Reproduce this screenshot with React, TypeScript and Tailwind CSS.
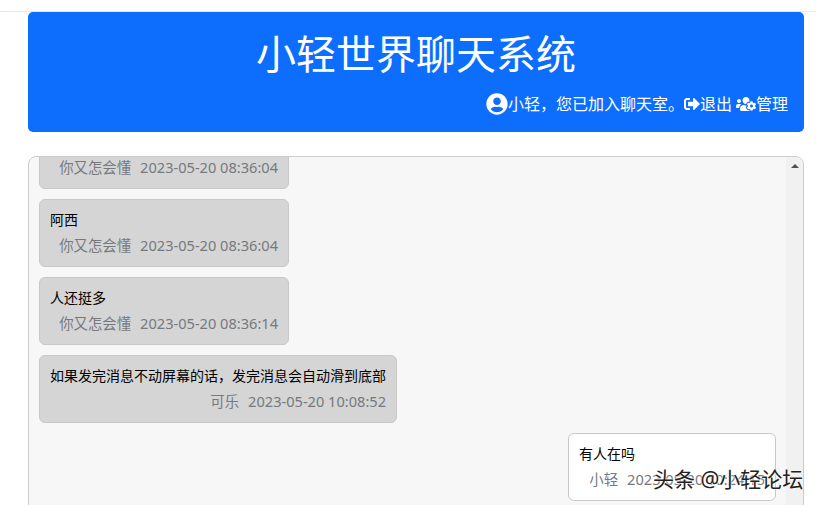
import * as React from "react"
import { FaUserCircle, FaSignOutAlt, FaUsersCog } from "react-icons/fa"

interface Message {
  text?: string
  user: string
  time: string
  mine?: boolean
  width: string
}

const messages: Message[] = [
  { text: "阿西", user: "你又怎会懂", time: "2023-05-20 08:36:04", width: "w-[250px]" },
  { text: "人还挺多", user: "你又怎会懂", time: "2023-05-20 08:36:14", width: "w-[250px]" },
  { text: "如果发完消息不动屏幕的话，发完消息会自动滑到底部", user: "可乐", time: "2023-05-20 10:08:52", width: "w-[358px]" },
]

function Meta({ user, time }: { user: string; time: string }) {
  return (
    <div className="flex justify-end gap-[9px] text-[14.4px] leading-[21px] text-[#75797e]">
      <span>{user}</span>
      <span className="text-[14.6px] font-['Noto_Sans']">{time}</span>
    </div>
  )
}

function Bubble({ message }: { message: Message }) {
  const tone = message.mine ? "bg-white self-end" : "bg-[#d5d5d5] self-start"
  return (
    <div className={`${tone} ${message.width} h-[68px] shrink-0 rounded-[6px] border border-[#c8c8c8] px-[10px] pt-[9px]`}>
      <div className="mb-[5px] text-[14px] leading-[21px] text-black">{message.text}</div>
      <Meta user={message.user} time={message.time} />
    </div>
  )
}

export default function App() {
  return (
    <div
      className="relative h-[505px] w-[816px] overflow-hidden bg-white"
      style={{ fontFamily: '"Noto Sans", "Noto Sans CJK SC", sans-serif' }}
    >
      <div className="h-3 border-b border-[#e8e8e8]" />

      <div className="mx-[12px] ml-[28px] mt-0 flex h-[120px] flex-col rounded-[5px] bg-[#0d6efd] px-4 text-white">
        <h1 className="mt-[18px] text-center text-[40px] leading-[48px]">小轻世界聊天系统</h1>
        <div className="mt-[14px] flex items-center justify-end text-[16px] leading-6">
          <FaUserCircle className="text-[22px]" />
          <span>小轻，您已加入聊天室。</span>
          <FaSignOutAlt className="text-[16px]" />
          <span className="mr-[4px]">退出</span>
          <FaUsersCog className="text-[20px]" />
          <span>管理</span>
        </div>
      </div>

      <div className="ml-[28px] mr-[12px] mt-6 flex h-[370px] overflow-hidden rounded-[8px] border border-[#cccccc] bg-[#f7f7f7]">
        <div className="flex min-w-0 flex-1 flex-col gap-[10px] pl-[10px] pr-[10px]">
          <div className="-mt-[36px] flex h-[68px] w-[250px] shrink-0 flex-col justify-end rounded-[6px] border border-[#c8c8c8] bg-[#d5d5d5] px-[10px] pb-[10px]">
            <Meta user="你又怎会懂" time="2023-05-20 08:36:04" />
          </div>
          {messages.map((m) => (
            <Bubble key={m.time + m.text} message={m} />
          ))}
          <Bubble message={{ text: "有人在吗", user: "小轻", time: "2023-05-20 10:24:15", mine: true, width: "w-[208px]" }} />
        </div>
        <div className="flex w-[17px] shrink-0 justify-center bg-[#f1f1f1] pt-[7px]">
          <div className="h-0 w-0 border-x-[4px] border-b-[4px] border-x-transparent border-b-[#505050]" />
        </div>
      </div>

      <div className="absolute left-[653px] top-[466px] text-[21px] leading-[26px] text-[#222222] [text-shadow:0_0_2px_#ffffff,0_0_2px_#ffffff]">
        头条 @小轻论坛
      </div>
    </div>
  )
}
